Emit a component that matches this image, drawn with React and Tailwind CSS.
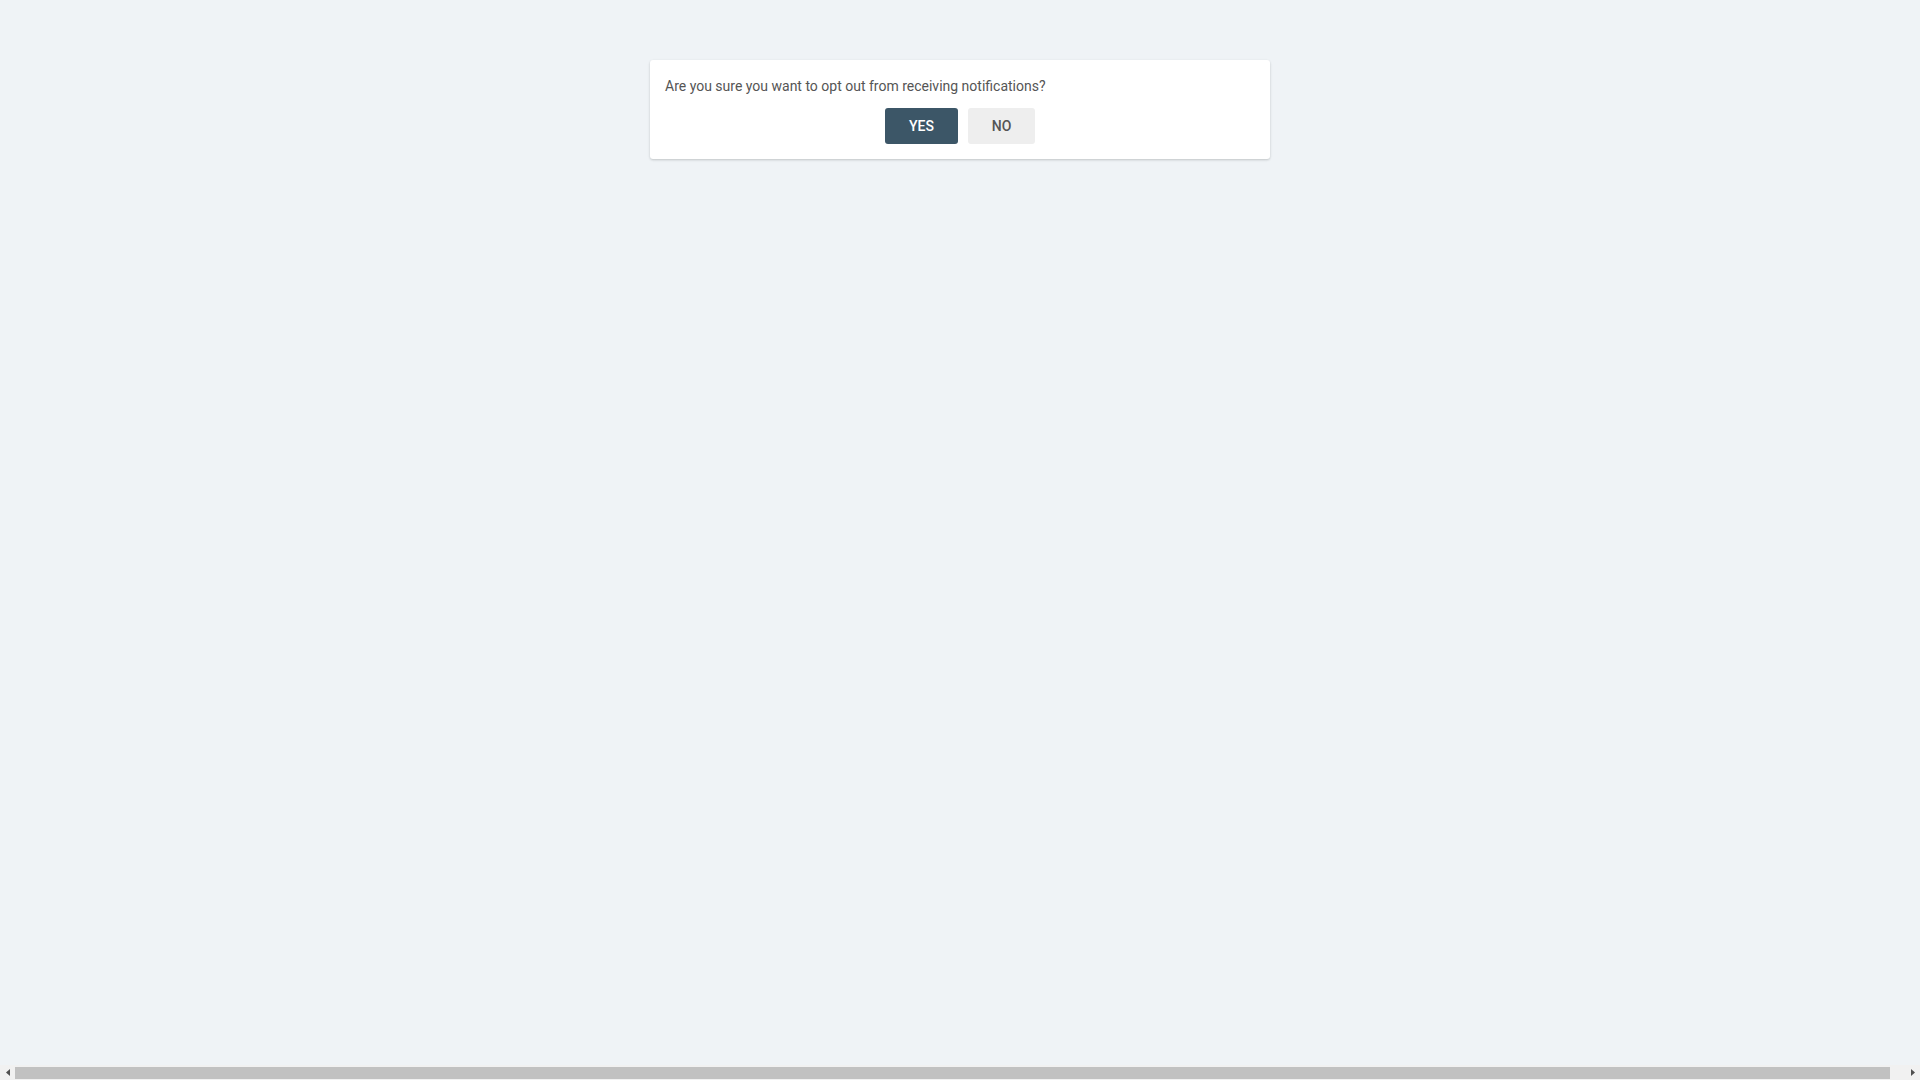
export default function App() {
  return (
    <div
      className="h-screen flex flex-col bg-[#eff3f6]"
      style={{ fontFamily: "Roboto, 'Liberation Sans', sans-serif" }}
    >
      <div className="flex-1 flex justify-center items-start pt-[60px]">
        <div className="w-[620px] bg-white rounded-[3px] shadow-[0_1px_3px_rgba(0,0,0,0.12),0_1px_2px_rgba(0,0,0,0.08)] pt-4 pb-[15px] px-[15px]">
          <p className="text-[14px] leading-5 text-[#555555]">
            Are you sure you want to opt out from receiving notifications?
          </p>
          <div className="flex justify-center gap-[10px] mt-3">
            <button className="w-[73px] h-9 rounded-[3px] bg-[#3c5667] text-white text-[14px] font-medium">
              YES
            </button>
            <button className="w-[67px] h-9 rounded-[3px] bg-[#eeeeee] text-[#555555] text-[14px] font-medium">
              NO
            </button>
          </div>
        </div>
      </div>

      {/* horizontal scrollbar */}
      <div className="h-[15px] flex items-center bg-[#f1f1f1]">
        <div className="w-[15px] h-full flex items-center justify-center">
          <svg width="4" height="7" viewBox="0 0 4 7">
            <path d="M4 0 L0 3.5 L4 7 Z" fill="#505050" />
          </svg>
        </div>
        <div className="flex-1 h-[12px] bg-[#c1c1c1]" />
        <div className="w-[15px]" />
        <div className="w-[15px] h-full flex items-center justify-center">
          <svg width="4" height="7" viewBox="0 0 4 7">
            <path d="M0 0 L4 3.5 L0 7 Z" fill="#505050" />
          </svg>
        </div>
      </div>
    </div>
  );
}
